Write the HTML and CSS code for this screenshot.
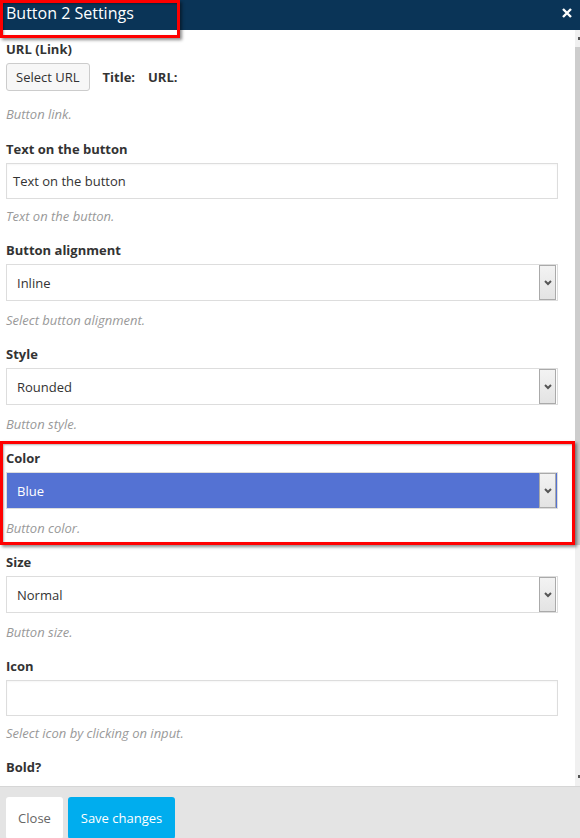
FILE: index.html
```html
<!DOCTYPE html>
<html>

<head>
    <meta name="viewport" content="width=device-width, initial-scale=1.0">
    <link rel="stylesheet" href="styles.css">
</head>

<body>
    <div class="modal">
        <div class="modal-header">
            <span class="modal-title">Button 2 Settings</span>
            <svg class="modal-close" width="10" height="10" viewBox="0 0 10 10">
                <path d="M1 1 L9 9 M9 1 L1 9" stroke="#fff" stroke-width="2.4" fill="none" />
            </svg>
        </div>

        <div class="modal-body">
            <div class="fields">
                <div class="field field-url">
                    <div class="field-label">URL (Link)</div>
                    <div class="url-row">
                        <button class="btn-url">Select URL</button>
                        <b>Title:</b>
                        <b>URL:</b>
                    </div>
                    <div class="field-help help-url">Button link.</div>
                </div>

                <div class="field">
                    <div class="field-label">Text on the button</div>
                    <div class="input">Text on the button</div>
                    <div class="field-help">Text on the button.</div>
                </div>

                <div class="field">
                    <div class="field-label">Button alignment</div>
                    <div class="select">
                        <span>Inline</span>
                        <span class="select-arrow"><svg width="8" height="6" viewBox="0 0 8 6"><path d="M1 1 L4 4 L7 1" stroke="#555" stroke-width="2" fill="none" /></svg></span>
                    </div>
                    <div class="field-help">Select button alignment.</div>
                </div>

                <div class="field">
                    <div class="field-label">Style</div>
                    <div class="select">
                        <span>Rounded</span>
                        <span class="select-arrow"><svg width="8" height="6" viewBox="0 0 8 6"><path d="M1 1 L4 4 L7 1" stroke="#555" stroke-width="2" fill="none" /></svg></span>
                    </div>
                    <div class="field-help">Button style.</div>
                </div>

                <div class="field">
                    <div class="field-label">Color</div>
                    <div class="select select-blue">
                        <span>Blue</span>
                        <span class="select-arrow"><svg width="8" height="6" viewBox="0 0 8 6"><path d="M1 1 L4 4 L7 1" stroke="#555" stroke-width="2" fill="none" /></svg></span>
                    </div>
                    <div class="field-help">Button color.</div>
                </div>

                <div class="field">
                    <div class="field-label">Size</div>
                    <div class="select">
                        <span>Normal</span>
                        <span class="select-arrow"><svg width="8" height="6" viewBox="0 0 8 6"><path d="M1 1 L4 4 L7 1" stroke="#555" stroke-width="2" fill="none" /></svg></span>
                    </div>
                    <div class="field-help">Button size.</div>
                </div>

                <div class="field">
                    <div class="field-label">Icon</div>
                    <div class="input"></div>
                    <div class="field-help">Select icon by clicking on input.</div>
                </div>

                <div class="field">
                    <div class="field-label">Bold?</div>
                </div>
            </div>

            <div class="scrollbar">
                <div class="scroll-up"><i></i></div>
                <div class="scroll-thumb"></div>
                <div class="scroll-track"></div>
                <div class="scroll-down"><i></i></div>
            </div>
        </div>

        <div class="modal-footer">
            <button class="btn btn-close">Close</button>
            <button class="btn btn-save">Save changes</button>
        </div>

        <div class="mark mark-title"></div>
        <div class="mark mark-color"></div>
    </div>
</body>

</html>
```

FILE: styles.css
```css
body {
    margin: 0;
    font-family: "Open Sans", "Liberation Sans", sans-serif;
    font-size: 13px;
    color: #333;
}

.modal {
    position: relative;
    width: 580px;
    height: 838px;
    display: flex;
    flex-direction: column;
    overflow: hidden;
    background: #fff;
}

.modal-header {
    height: 30px;
    flex-shrink: 0;
    background-color: #0a3457;
    display: flex;
    align-items: center;
    justify-content: space-between;
    padding: 0 8px 0 6px;
}

.modal-title {
    color: #fff;
    font-size: 16px;
    line-height: 26px;
    margin-top: -4px;
}

.modal-close {
    margin-top: -4px;
}

.modal-body {
    flex: 1;
    display: flex;
    overflow: hidden;
}

.fields {
    flex: 1;
    padding: 10px 17px 0 6px;
}

.field {
    padding-bottom: 16px;
}

.field-url {
    padding-bottom: 17px;
}

.field-label {
    font-weight: 700;
    line-height: 18px;
    margin-bottom: 5px;
}

.field-help {
    font-style: italic;
    color: #999;
    line-height: 18px;
    margin-top: 8px;
}

.url-row {
    display: flex;
    align-items: center;
    gap: 13px;
    margin-top: 1px;
}

.url-row b {
    font-weight: 700;
}

.btn-url {
    height: 28px;
    padding: 0 9px;
    font-family: inherit;
    font-size: 13px;
    color: #333;
    background: #f7f7f7;
    border: 1px solid #ccc;
    border-radius: 3px;
}

.help-url {
    margin-top: 14px;
}

.input {
    height: 36px;
    box-sizing: border-box;
    border: 1px solid #ddd;
    box-shadow: inset 0 1px 2px rgba(0, 0, 0, 0.04);
    padding-left: 6px;
    line-height: 34px;
}

.select {
    height: 37px;
    box-sizing: border-box;
    border: 1px solid #ddd;
    display: flex;
    align-items: center;
    justify-content: space-between;
    padding: 0 1px 0 10px;
}

.select + .field-help {
    margin-top: 10px;
}

.select-blue {
    background-color: #5472d3;
    color: #fff;
}

.select-arrow {
    width: 17px;
    height: 35px;
    box-sizing: border-box;
    border: 1px solid #aaa;
    background: linear-gradient(#f3f3f3, #e3e3e3);
    display: flex;
    align-items: center;
    justify-content: center;
}

.scrollbar {
    width: 5px;
    display: flex;
    flex-direction: column;
    background: #f0f0f0;
}

.scroll-up,
.scroll-down {
    height: 17px;
    position: relative;
}

.scroll-up i,
.scroll-down i {
    position: absolute;
    left: 3px;
    width: 2px;
    height: 3px;
    background: #555;
}

.scroll-up i {
    top: 7px;
}

.scroll-down i {
    top: 6px;
}

.scroll-thumb {
    height: 498px;
    background: #cdcdcd;
}

.scroll-track {
    flex: 1;
}

.modal-footer {
    height: 52px;
    flex-shrink: 0;
    box-sizing: border-box;
    background: #e4e4e4;
    border-top: 1px solid #d6d6d6;
    display: flex;
    gap: 5px;
    padding: 10px 6px 0;
}

.btn {
    height: 42px;
    border: 0;
    border-radius: 3px;
    font-family: inherit;
    font-size: 13px;
}

.btn-close {
    width: 57px;
    background: #fff;
    color: #666;
}

.btn-save {
    width: 107px;
    background: #00adee;
    color: #fff;
}

/* red highlight frames */
.mark {
    position: absolute;
    border: 3px solid #f00;
    box-shadow: 2px 2px 3px rgba(0, 0, 0, 0.45), inset 1px 1px 2px rgba(0, 0, 0, 0.3);
}

.mark-title {
    left: 0;
    top: 0;
    width: 174px;
    height: 32px;
}

.mark-color {
    left: 0;
    top: 441px;
    width: 569px;
    height: 98px;
}
```
